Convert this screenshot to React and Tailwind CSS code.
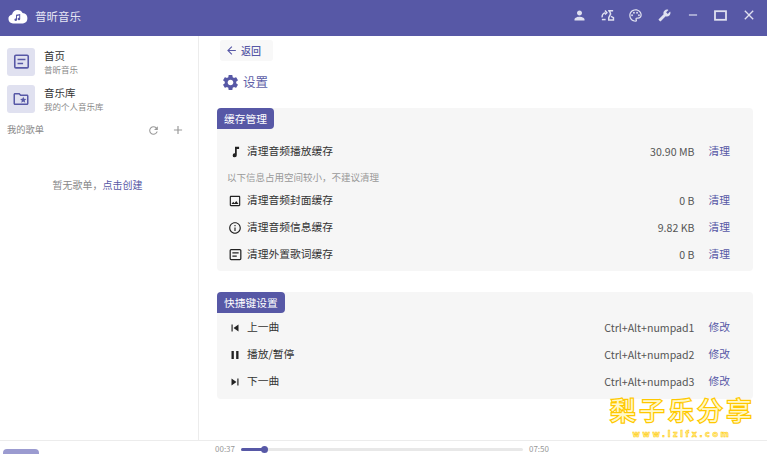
import React from "react";
import {
  MdAdd,
  MdArrowBack,
  MdBuild,
  MdClose,
  MdOutlineFolderSpecial,
  MdOutlineImage,
  MdOutlineInfo,
  MdOutlinePalette,
  MdPause,
  MdPerson,
  MdRefresh,
  MdRemove,
  MdSettings,
  MdSkipNext,
  MdSkipPrevious,
} from "react-icons/md";

const font = { fontFamily: '"Noto Sans CJK SC", "Noto Sans", sans-serif' };

const CloudLogo = () => (
  <svg width="20" height="16" viewBox="0 0 20 16">
    <path
      fill="#fff"
      d="M5 15.500a4.600 4.600 0 0 1-.9-9.100A5.600 5.600 0 0 1 14.600 5a5.300 5.300 0 0 1 .4 10.500z"
    />
    <path
      fill="#5758a6"
      d="M8 6.800l4.200-.8v5a1.300 1.300 0 1 1-1-1.300V7.600l-2.200.4v3.800a1.300 1.300 0 1 1-1-1.300z"
    />
  </svg>
);

const NoteIcon = () => (
  <svg width="14" height="14" viewBox="0 0 24 24" fill="currentColor">
    <path d="M12 3h7v4h-4v10.500A3.500 3.500 0 1 1 12 14.200z" />
  </svg>
);

const ThemeSwapIcon = () => (
  <svg width="15" height="15" viewBox="0 0 24 24" fill="none" stroke="currentColor" strokeWidth="2.400">
    <path d="M3.500 15a6.500 6.500 0 0 1 5-7.500" />
    <path d="M8 4l3 3.500-3 3" />
    <path d="M3 18.500h6" />
    <path d="M13 4.500h8M15 4.500l2 5-3 6v3.500h7.500v-3.500l-4-2" />
  </svg>
);

const ListIcon = ({ size }) => (
  <svg width={size} height={size} viewBox="0 0 24 24" fill="none" stroke="currentColor" strokeWidth="2">
    <rect x="3.500" y="4" width="17" height="16" rx="1.500" />
    <path d="M7 9.500h10M7 14.500h7" />
  </svg>
);

const SquareIcon = () => (
  <svg width="13" height="11" viewBox="0 0 13 11" fill="none" stroke="currentColor" strokeWidth="1.800">
    <rect x="1" y="1.200" width="11" height="8.600" />
  </svg>
);

const NavItem = ({ icon, title, sub }) => (
  <div className="flex items-center h-[37px]">
    <div className="w-[28px] h-[28px] rounded-[3px] bg-[#e0e1f0] text-[#5758a6] flex items-center justify-center shrink-0">
      {icon}
    </div>
    <div className="ml-[9px] flex flex-col">
      <span className="text-[10.500px] leading-[14px] text-[#333]">{title}</span>
      <span className="mt-[1px] text-[8.500px] leading-[11px] text-[#888]">{sub}</span>
    </div>
  </div>
);

const Section = ({ title, children, className }) => (
  <div className={`bg-[#f6f6f6] rounded-[4px] ${className}`}>
    <div className="w-fit h-[21px] px-[7px] bg-[#5758a6] text-white text-[10.750px] leading-[21px] rounded-tl-[4px] rounded-br-[4px] rounded-tr-[4px]">
      {title}
    </div>
    {children}
  </div>
);

const Row = ({ icon, label, value, action }) => (
  <div className="flex items-center h-[27px] pt-[2px] pl-[11px] pr-[23px] text-[10.750px]">
    <span className="w-[19px] flex items-center text-[#222]">{icon}</span>
    <span className="text-[#333]">{label}</span>
    <span className="ml-auto text-[10.600px] text-[#555]">{value}</span>
    <span className="ml-[14px] text-[#5758a6]">{action}</span>
  </div>
);

export default function App() {
  return (
    <div className="relative h-[454px] w-[767px] overflow-hidden bg-white flex flex-col" style={font}>
      <header className="h-[36px] shrink-0 bg-[#5758a6] flex items-center text-white pl-[8px] pr-[10px] pb-[4px]">
        <CloudLogo />
        <span className="ml-[7px] mt-[1px] text-[11.500px] text-[#e6e6f4]">普昕音乐</span>
        <div className="ml-auto flex items-center text-[#dfe0f0] mt-[-2px]">
          <MdPerson size={15} />
          <span className="ml-[13px]"><ThemeSwapIcon /></span>
          <MdOutlinePalette size={15} className="ml-[13px]" />
          <MdBuild size={13} className="ml-[15px] -scale-x-100" />
          <MdRemove size={14} className="ml-[15px]" />
          <span className="ml-[14px]"><SquareIcon /></span>
          <MdClose size={16} className="ml-[14px]" />
        </div>
      </header>

      <div className="flex-1 flex min-h-0">
        <aside className="w-[199px] shrink-0 border-r border-[#ececec] pl-[7px] pr-[14px] pt-[7px]">
          <NavItem icon={<ListIcon size={19} />} title="首页" sub="普昕音乐" />
          <NavItem icon={<MdOutlineFolderSpecial size={18} />} title="音乐库" sub="我的个人音乐库" />
          <div className="flex items-center h-[16px] mt-[5px] text-[#999]">
            <span className="text-[9.250px] text-[#888]">我的歌单</span>
            <MdRefresh size={13} className="ml-auto" />
            <MdAdd size={14} className="ml-[11px] mr-[-1px]" />
          </div>
          <p className="mt-[39px] text-center text-[10px] text-[#888] pl-[4px]">
            暂无歌单，<span className="text-[#5758a6]">点击创建</span>
          </p>
        </aside>

        <main className="flex-1 pl-[18px] pr-[14px] pt-[4px]">
          <button className="ml-[3px] h-[21px] w-[53px] rounded-[3px] bg-[#f8f8f8] text-[#5758a6] text-[10px] font-medium flex items-center pl-[5px]">
            <MdArrowBack size={13} />
            <span className="ml-[3px]">返回</span>
          </button>
          <div className="flex items-center h-[24px] mt-[9px] ml-[4px] text-[#5758a6]">
            <MdSettings size={19} />
            <span className="ml-[3px] text-[12.500px] text-[#5e5fa8]">设置</span>
          </div>
          <Section title="缓存管理" className="mt-[14px] h-[163px]">
            <div className="pt-[8px]">
              <Row icon={<NoteIcon />} label="清理音频播放缓存" value="30.90 MB" action="清理" />
            </div>
            <div className="pl-[10px] h-[22px] leading-[26px] text-[9.500px] text-[#999]">以下信息占用空间较小，不建议清理</div>
            <Row icon={<MdOutlineImage size={14} />} label="清理音频封面缓存" value="0 B" action="清理" />
            <Row icon={<MdOutlineInfo size={14} />} label="清理音频信息缓存" value="9.82 KB" action="清理" />
            <Row icon={<ListIcon size={15} />} label="清理外置歌词缓存" value="0 B" action="清理" />
          </Section>
          <Section title="快捷键设置" className="mt-[21px] h-[107px]">
            <Row icon={<MdSkipPrevious size={14} />} label="上一曲" value="Ctrl+Alt+numpad1" action="修改" />
            <Row icon={<MdPause size={14} />} label="播放/暂停" value="Ctrl+Alt+numpad2" action="修改" />
            <Row icon={<MdSkipNext size={14} />} label="下一曲" value="Ctrl+Alt+numpad3" action="修改" />
          </Section>
        </main>
      </div>

      <footer className="h-[14px] shrink-0 border-t border-[#ececec] flex items-start relative">
        <div className="w-[36px] h-[12px] ml-[3px] mt-[8px] rounded-t-[4px] bg-[#9b9bd0]" />
        <div className="ml-[176px] flex items-center h-[16px] text-[8px] text-[#999]">
          <span>00:37</span>
          <div className="ml-[6px] w-[282px] h-[3px] bg-[#e8e8e8] rounded-full relative">
            <div className="h-[3px] w-[23px] bg-[#5758a6] rounded-full" />
            <div className="absolute left-[20px] top-[-2px] w-[7px] h-[7px] rounded-full bg-[#5758a6]" />
          </div>
          <span className="ml-[6px]">07:50</span>
        </div>
      </footer>

      <div className="absolute left-[608px] top-[394px] w-[150px] text-center">
        <div className="text-[25px] leading-[30px] tracking-[4px] text-[#fff8c8] [-webkit-text-stroke:2.500px_#ffc800] [paint-order:stroke] whitespace-nowrap">梨子乐分享</div>
        <div className="text-[8px] leading-[10px] mt-[6px] ml-[-2px] tracking-[2.600px] font-bold text-[#fff3a0] [-webkit-text-stroke:0.5px_#ffc800] whitespace-nowrap" style={{ fontFamily: '"DejaVu Sans", sans-serif' }}>www.lzlfx.com</div>
      </div>
    </div>
  );
}
